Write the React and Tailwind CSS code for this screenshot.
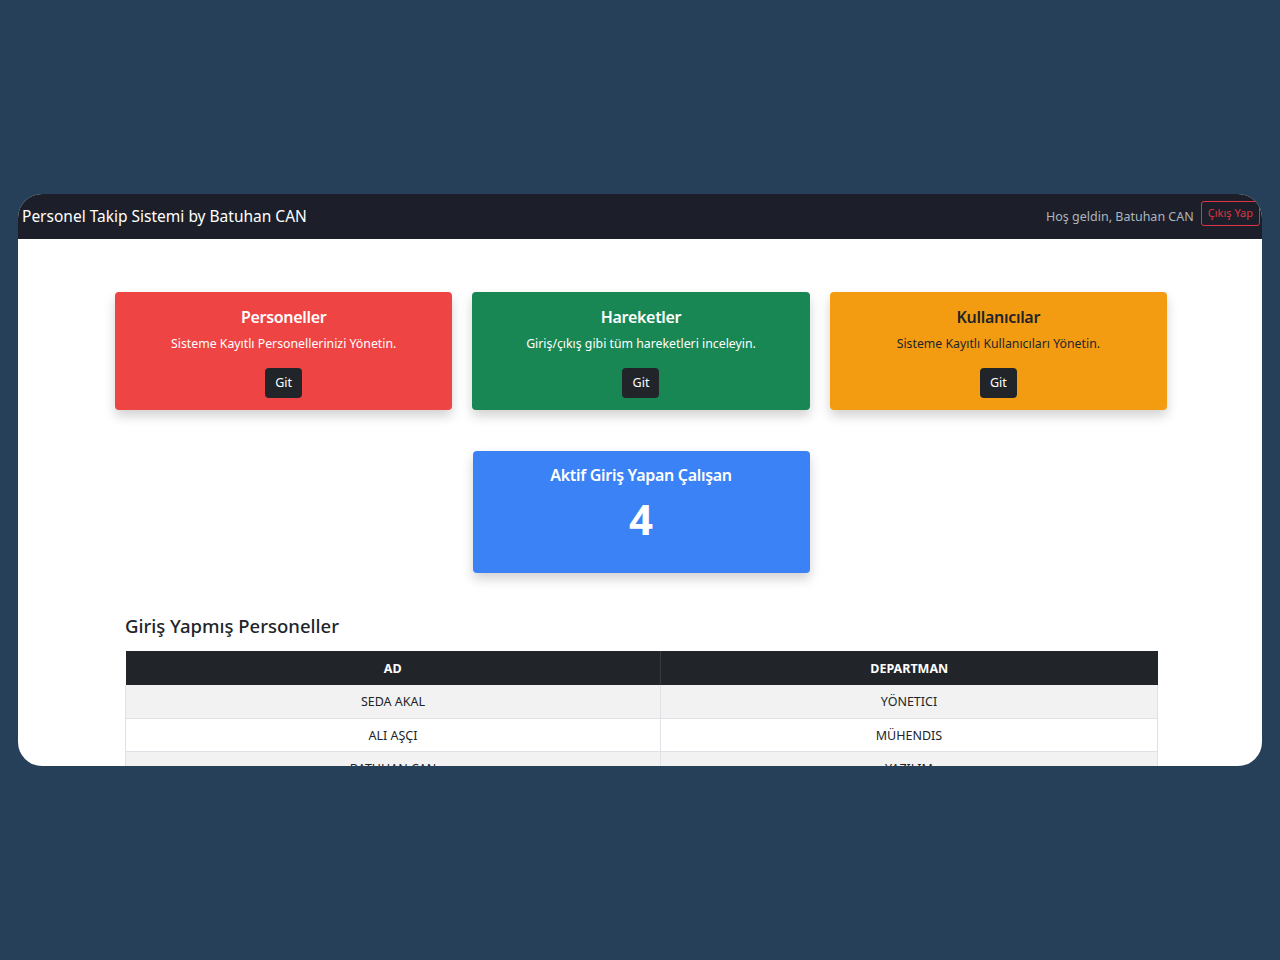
import React from "react";

const cards = [
  {
    title: "Personeller",
    text: "Sisteme Kayıtlı Personellerinizi Yönetin.",
    bg: "bg-[#ef4444]",
    color: "text-white",
  },
  {
    title: "Hareketler",
    text: "Giriş/çıkış gibi tüm hareketleri inceleyin.",
    bg: "bg-[#198754]",
    color: "text-white",
  },
  {
    title: "Kullanıcılar",
    text: "Sisteme Kayıtlı Kullanıcıları Yönetin.",
    bg: "bg-[#f39c12]",
    color: "text-[#212529]",
  },
];

const rows = [
  ["SEDA AKAL", "YÖNETICI"],
  ["ALI AŞÇI", "MÜHENDIS"],
  ["BATUHAN CAN", "YAZILIM"],
];

export default function App() {
  return (
    <div
      className="h-[960px] w-[1280px] bg-[#27405a] pt-[194px] pl-[18px]"
      style={{ fontFamily: '"Noto Sans", "Open Sans", sans-serif' }}
    >
      <div className="w-[1244px] h-[572px] overflow-hidden rounded-[24px] bg-white">
        {/* navbar */}
        <nav className="h-[45px] bg-[#1c1f29] flex items-center justify-between pl-[4px] pr-[2px]">
          <span className="text-[15.5px] text-white">Personel Takip Sistemi by Batuhan CAN</span>
          <div className="flex items-center gap-[7px]">
            <span className="text-[12.5px] text-[#adb5bd] mt-[2px]">Hoş geldin, Batuhan CAN</span>
            <button className="h-[25px] px-[6px] border border-[#dc3545] rounded-[3px] text-[11px] text-[#dc3545] mb-[7px]">
              Çıkış Yap
            </button>
          </div>
        </nav>

        <div className="pt-[53px] pl-[97px] w-[1149px]">
          <div className="grid grid-cols-3 gap-[20px]">
            {cards.map((c) => (
              <div
                key={c.title}
                className={`${c.bg} ${c.color} h-[118px] rounded-[4px] shadow-[0_6px_12px_rgba(0,0,0,0.18)] flex flex-col items-center pt-[13px]`}
              >
                <h3 className="text-[16px] font-semibold leading-[24px] tracking-[-0.3px]">{c.title}</h3>
                <p className="text-[12.3px] mt-[6px] leading-[18px]">{c.text}</p>
                <button className="mt-[15px] h-[30px] w-[37px] rounded-[4px] bg-[#212529] text-white text-[12.5px]">
                  Git
                </button>
              </div>
            ))}
          </div>

          <div className="flex justify-center mt-[41px]">
            <div className="w-[337px] h-[122px] rounded-[4px] bg-[#3b82f6] text-white shadow-[0_6px_12px_rgba(0,0,0,0.18)] flex flex-col items-center pt-[12px]">
              <h3 className="text-[16px] font-semibold leading-[24px] tracking-[-0.3px]">Aktif Giriş Yapan Çalışan</h3>
              <div className="text-[42px] font-bold leading-[48px] mt-[8px]">4</div>
            </div>
          </div>

          <div className="pl-[10px] pr-[9px] mt-[40px]">
            <h4 className="text-[18.5px] font-medium text-[#212529] leading-[26px]">Giriş Yapmış Personeller</h4>
            <table className="mt-[12px] w-[1033px] text-[12.5px] text-[#212529] border-collapse">
              <thead>
                <tr className="bg-[#212529] text-white h-[34px]">
                  <th className="w-[535px] font-bold border-r border-[#373b3e] pt-[2px]">AD</th>
                  <th className="font-bold pt-[2px]">DEPARTMAN</th>
                </tr>
              </thead>
              <tbody>
                {rows.map((r, i) => (
                  <tr
                    key={r[0]}
                    className={`h-[33px] border-b border-[#dee2e6] ${i % 2 === 0 ? "bg-[#f2f2f2]" : "bg-white"}`}
                  >
                    <td className="text-center border-x border-[#dee2e6] pt-[3px]">{r[0]}</td>
                    <td className="text-center border-r border-[#dee2e6] pt-[3px]">{r[1]}</td>
                  </tr>
                ))}
              </tbody>
            </table>
          </div>
        </div>
      </div>
    </div>
  );
}
